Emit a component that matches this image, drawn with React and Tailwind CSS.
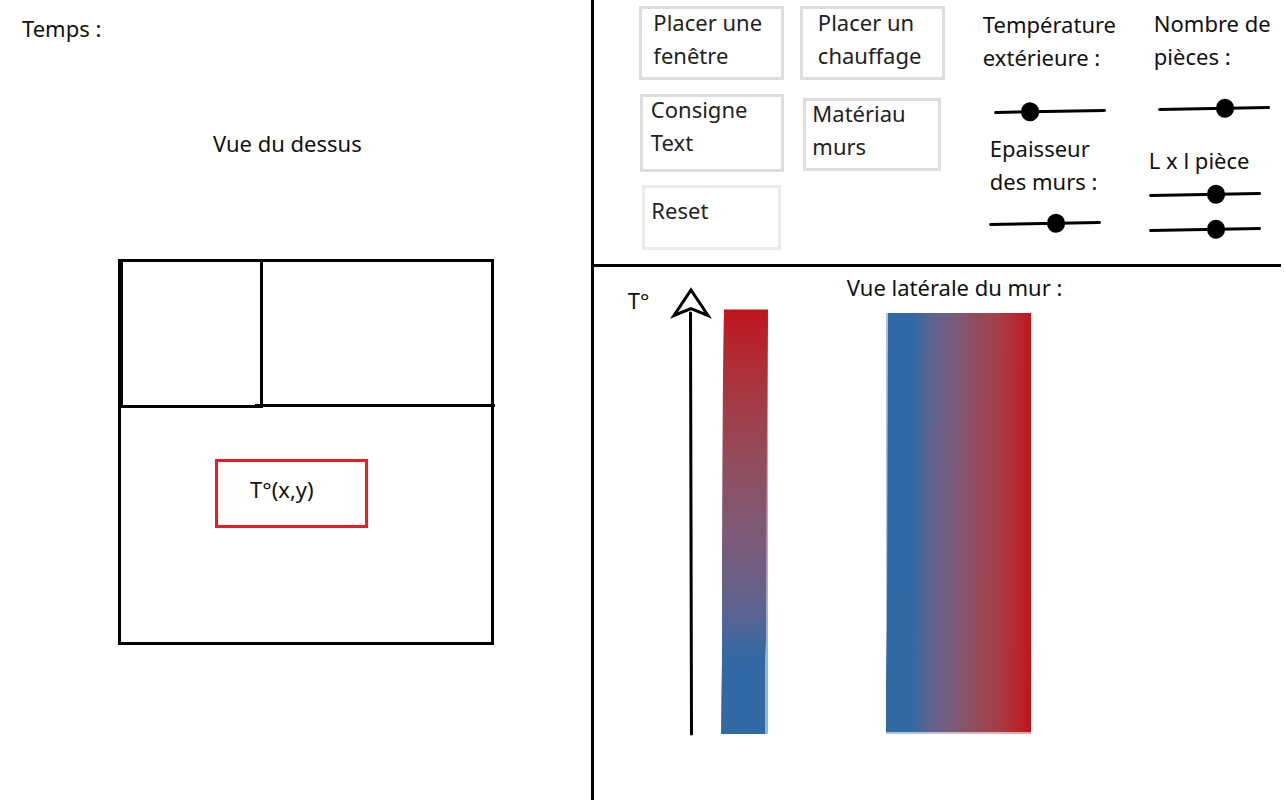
import React from "react";

const sliderClass =
  "block h-5 w-28 -rotate-1 cursor-pointer appearance-none bg-transparent [&::-webkit-slider-runnable-track]:h-[3px] [&::-webkit-slider-runnable-track]:rounded-full [&::-webkit-slider-runnable-track]:bg-black [&::-webkit-slider-thumb]:mt-[-8px] [&::-webkit-slider-thumb]:h-[19px] [&::-webkit-slider-thumb]:w-[18px] [&::-webkit-slider-thumb]:appearance-none [&::-webkit-slider-thumb]:rounded-full [&::-webkit-slider-thumb]:bg-black";

function Slider({ id, value, label }) {
  return (
    <input
      id={id}
      type="range"
      min="0"
      max="100"
      defaultValue={value}
      aria-label={label}
      className={sliderClass}
    />
  );
}

function ToolButton({ className, children }) {
  return (
    <button
      type="button"
      className={`flex items-start border-[3px] bg-white text-left text-[#222] ${className}`}
    >
      <span className="-mt-1">{children}</span>
    </button>
  );
}

function FloorPlan() {
  return (
    <div className="mt-[99px] ml-[118px] h-[386px] w-[376px] border-[3px] border-black">
      <div className="flex h-[146px] items-start">
        <div className="h-[146px] w-[142px] border-r-[3px] border-b-[3px] border-l-2 border-black" />
        <div className="-mr-1 -ml-2 h-[145px] flex-1 border-b-[3px] border-black" />
      </div>
      <div className="mt-[51px] ml-[94px] h-[69px] w-[153px] border-[3px] border-[#ed1c24] pt-[11px] pl-8">
        T°(x,y)
      </div>
    </div>
  );
}

function Axis() {
  return (
    <svg className="mt-[19px] ml-[18px] shrink-0" width="42" height="450" viewBox="670 286 42 450" fill="none" stroke="#000" strokeWidth="3" aria-hidden="true">
      <path d="M691 290 L708 315.500 L691 308.500 L674 315.500 Z" strokeMiterlimit="10" />
      <path d="M690.5 313 L691.5 734" strokeLinecap="round" />
    </svg>
  );
}

function TemperatureScale() {
  return (
    <svg className="mt-[42px] ml-[8px] shrink-0" width="49" height="426" viewBox="720 309 49 426" aria-hidden="true">
      <defs>
        <linearGradient id="scale" x1="745" y1="310" x2="745" y2="734" gradientUnits="userSpaceOnUse">
          <stop offset="0" stopColor="#c0151f" />
          <stop offset="0.12" stopColor="#b02c35" />
          <stop offset="0.22" stopColor="#a43b46" />
          <stop offset="0.36" stopColor="#924c5c" />
          <stop offset="0.5" stopColor="#805873" />
          <stop offset="0.6" stopColor="#725d80" />
          <stop offset="0.72" stopColor="#596492" />
          <stop offset="0.82" stopColor="#3069a4" />
          <stop offset="1" stopColor="#3069a4" />
        </linearGradient>
      </defs>
      <path d="M724 308 H768 V734 H721 L722 660 V560 L723 380 Z" fill="url(#scale)" opacity="0.5" />
      <path d="M724 310 H768 L767 420 L766 640 L765 660 V734 H721 L722 660 V560 L723 380 Z" fill="url(#scale)" />
    </svg>
  );
}

function Wall() {
  return (
    <svg className="mt-[9px] ml-[39px]" width="145" height="421" viewBox="886 313 145 421" aria-hidden="true">
      <defs>
        <linearGradient id="wall" x1="886" y1="520" x2="1031" y2="521" gradientUnits="userSpaceOnUse">
          <stop offset="0" stopColor="#3069a4" />
          <stop offset="0.17" stopColor="#3069a4" />
          <stop offset="0.31" stopColor="#5e638f" />
          <stop offset="0.48" stopColor="#7c5a76" />
          <stop offset="0.63" stopColor="#934b5b" />
          <stop offset="0.8" stopColor="#a93a42" />
          <stop offset="0.92" stopColor="#b8252e" />
          <stop offset="1" stopColor="#c0141e" />
        </linearGradient>
      </defs>
      <path d="M886 313 H1031 V734 H886 Z" fill="url(#wall)" opacity="0.4" />
      <path d="M888 313 H1031 V732 H886 V680 L887 620 Z" fill="url(#wall)" />
    </svg>
  );
}

export default function App() {
  return (
    <main className="flex min-h-screen bg-white font-['Noto_Sans','Open_Sans',sans-serif] text-[22px] leading-[33px] text-[#111]">
      <section className="w-[46.25%] shrink-0 border-r-[3px] border-black">
        <p className="pt-[12px] pl-[22px]">Temps :</p>
        <h2 className="mt-[82px] pl-[213px]">Vue du dessus</h2>
        <FloorPlan />
      </section>

      <div className="min-w-0 flex-1">
        <section className="mr-[3px] flex h-[267px] border-b-[3px] border-black pl-11">
          <div className="flex w-[148px] shrink-0 flex-col items-center pt-[6px]">
            <ToolButton className="h-[74px] w-[145px] border-[#dedede] pt-px pl-[11px]">
              Placer une
              <br />
              fenêtre
            </ToolButton>
            <ToolButton className="mt-[14px] h-[78px] w-[144px] border-[#dedede] pl-2">
              Consigne
              <br />
              Text
            </ToolButton>
            <ToolButton className="mt-[13px] h-[65px] w-[139px] border-[#ebebeb] pt-[10px] pl-[6px]">
              Reset
            </ToolButton>
          </div>
          <div className="ml-[13px] flex w-[147px] shrink-0 flex-col items-center pt-[6px]">
            <ToolButton className="h-[74px] w-[145px] border-[#dedede] pt-px pl-[15px]">
              Placer un
              <br />
              chauffage
            </ToolButton>
            <ToolButton className="mt-[18px] h-[73px] w-[138px] border-[#dedede] pl-[6px]">
              Matériau
              <br />
              murs
            </ToolButton>
          </div>

          <div className="ml-[37px] w-[166px] shrink-0 pt-[8px]">
            <label htmlFor="temp" className="block">
              Température
              <br />
              extérieure :
            </label>
            <div className="mt-[27px] ml-[11px]">
              <Slider id="temp" value="29" />
            </div>
            <label htmlFor="wall-width" className="mt-[11px] ml-[7px] block">
              Epaisseur
              <br />
              des murs :
            </label>
            <div className="mt-[15px] ml-[6px]">
              <Slider id="wall-width" value="62" />
            </div>
          </div>
          <div className="shrink-0 pt-[7px]">
            <label htmlFor="rooms" className="ml-[5px] block">
              Nombre de
              <br />
              pièces :
            </label>
            <div className="mt-[25px] ml-[9px]">
              <Slider id="rooms" value="62" />
            </div>
            <label htmlFor="length" className="mt-[26px] block">
              L x l pièce
            </label>
            <div className="mt-[7px] flex flex-col gap-[15px]">
              <Slider id="length" value="62" />
              <Slider id="width" value="62" label="Largeur de la pièce" />
            </div>
          </div>
        </section>

        <section className="flex items-start pl-[34px]">
          <span className="mt-[17px] w-[24px] shrink-0">T°</span>
          <Axis />
          <TemperatureScale />
          <div className="mt-[4px] ml-[78px]">
            <h2>Vue latérale du mur :</h2>
            <Wall />
          </div>
        </section>
      </div>
    </main>
  );
}
